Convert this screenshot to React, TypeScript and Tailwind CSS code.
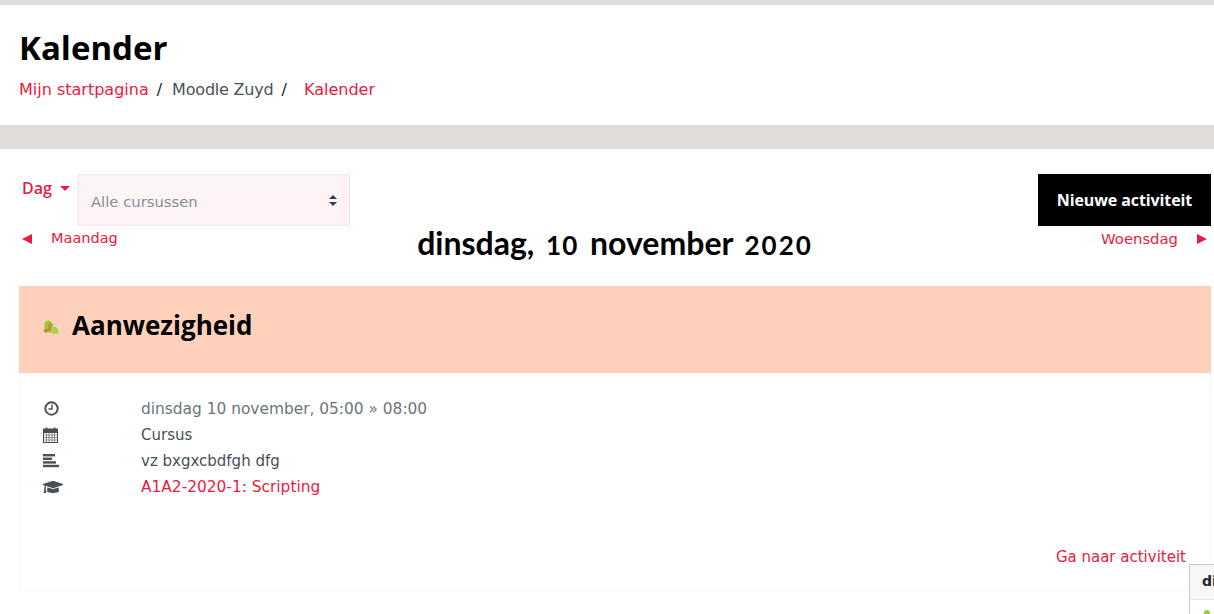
import { FaGraduationCap } from "react-icons/fa";

const body = "font-['DejaVu_Sans',Verdana,sans-serif]";
const display = "font-['Lato',sans-serif]";

function AttendanceIcon() {
  return (
    <svg width="17" height="16" viewBox="0.5 1.5 17 14" className="mb-[6px] shrink-0">
      <path d="M2 11 L2 5 Q3 2 5 2 L7 2 L9 5 L9 14 L3 14 Z" fill="#9acd32" />
      <path d="M6 3 Q8 2 9 4 L11 6 L10 9 L9 13 L2 14 L1 11 L6 10 Z" fill="#8cc63f" />
      <path d="M1 12 L6 10 L6 6 L7.5 5 L8 11 L3 14 Z" fill="#e8702a" />
      <path d="M10 9 Q13 7 15 10 L16 14 L17 15 L8 15 L10 13 Z" fill="#a4d63c" />
    </svg>
  );
}

function SelectArrows() {
  return (
    <svg width="8" height="11" viewBox="0 0 8 11">
      <path d="M4 0 L8 4 L0 4 Z M0 7 L8 7 L4 11 Z" fill="#343a40" />
    </svg>
  );
}

function ClockIcon() {
  return (
    <svg width="15" height="15" viewBox="0 0 15 15" fill="none" stroke="#495057" className="ml-[1px] -mt-[1px]">
      <circle cx="7.5" cy="7.5" r="6.2" strokeWidth="2" />
      <path d="M8 3.5 V8 H4.5" strokeWidth="1.4" />
    </svg>
  );
}

function CalendarIcon() {
  return (
    <svg width="16" height="16" viewBox="0 0 16 16" fill="none" stroke="#495057">
      <rect x="0.5" y="2.5" width="14" height="13" strokeWidth="1" />
      <rect x="0.5" y="2" width="14" height="3.5" fill="#495057" strokeWidth="1" />
      <path d="M3.5 0.5 V4 M11.5 0.5 V4" strokeWidth="1.6" />
      <path d="M0.5 8 H14.5 M0.5 10.5 H14.5 M0.5 13 H14.5 M3.5 5.5 V15.5 M6 5.5 V15.5 M9 5.5 V15.5 M11.5 5.5 V15.5" strokeWidth="0.6" />
    </svg>
  );
}

function AlignIcon() {
  return (
    <svg width="16" height="14" viewBox="0 0 16 14" fill="#495057">
      <rect x="0" y="0" width="12" height="2.4" />
      <rect x="0" y="3.6" width="9" height="2.4" />
      <rect x="0" y="7.2" width="13" height="2.4" />
      <rect x="0" y="10.8" width="16" height="2.4" />
    </svg>
  );
}

function InfoRow({ icon, children }: { icon: React.ReactNode; children: React.ReactNode }) {
  return (
    <div className="flex h-[26px] items-center">
      <div className="flex w-[98px] items-center">{icon}</div>
      <div>{children}</div>
    </div>
  );
}

export default function App() {
  return (
    <div className={`${body} relative h-[614px] overflow-hidden bg-white text-[15px] text-[#495057]`}>
      <div className="h-[5px] bg-[#e0dcd9]" />
      <header className="h-[120px] px-[19px] pt-[21px]">
        <h1 className="font-['Open_Sans',sans-serif] text-[33px] font-bold leading-[44px] text-black">Kalender</h1>
        <nav className="mt-[8px] flex h-[24px] items-center text-[16px]">
          <a className="text-[#ea1a40]">Mijn startpagina</a>
          <span className="ml-[8px] mr-[10px] text-[#212529]">/</span>
          <span className="tracking-[-0.2px]">Moodle Zuyd</span>
          <span className="ml-[8px] mr-[17px] text-[#212529]">/</span>
          <a className="text-[#ea1a40]">Kalender</a>
        </nav>
      </header>
      <div className="h-[24px] bg-[#e0dcd9]" />
      <main className="pl-[19px] pr-[3px] pt-[25px]">
        <div className="flex items-start justify-between">
          <div className="flex items-start">
            <button className="ml-[3px] mt-[2px] flex w-[56px] items-center font-['Open_Sans',sans-serif] text-[16px] font-semibold text-[#ea1a40]">
              Dag
              <span className="ml-[8px] border-x-[5px] border-t-[5px] border-x-transparent border-t-[#ea1a40]" />
            </button>
            <div className="flex h-[52px] w-[272px] items-center justify-between border border-[#f2e6e8] bg-[#fff4f5] px-[12px] text-[#868e96]">
              <span className="mt-[2px] pt-[2px] text-[14.8px]">Alle cursussen</span>
              <SelectArrows />
            </div>
          </div>
          <button className="h-[52px] w-[173px] bg-black font-['Open_Sans',sans-serif] text-[16px] font-bold tracking-[-0.1px] text-white">
            Nieuwe activiteit
          </button>
        </div>
        <div className="flex h-[60px] items-start justify-between">
          <a className="mt-[1px] flex h-[24px] w-[300px] items-center text-[14.5px] text-[#ea1a40]">
            <span className="ml-[3px] mr-[19px] border-y-[5px] border-r-[10px] border-y-transparent border-r-[#ea1a40]" />
            Maandag
          </a>
          <h2 className={`${display} text-[32px] font-bold leading-[34px] text-black [word-spacing:4px]`}>
            dinsdag, <span className="text-[26px] tracking-[1px]">10</span> november <span className="text-[26px] tracking-[2px]">2020</span>
          </h2>
          <a className="mt-[1px] flex h-[24px] w-[300px] items-center justify-end text-[14.8px] text-[#ea1a40]">
            Woensdag
            <span className="ml-[19px] mr-[4px] border-y-[5px] border-l-[10px] border-y-transparent border-l-[#ea1a40]" />
          </a>
        </div>
        <section>
          <div className="flex h-[87px] items-center gap-[12px] bg-[#ffd0bb] pl-[24px]">
            <AttendanceIcon />
            <h3 className="mb-[8px] font-['Open_Sans',sans-serif] text-[26px] font-bold text-black">Aanwezigheid</h3>
          </div>
          <div className="h-[218px] rounded-b border border-t-0 border-[#f6f6f6] pl-[23px] pr-[24px] pt-[23px]">
            <InfoRow icon={<ClockIcon />}>
              <span className="relative top-[1px] text-[15.4px] text-[#6c757d]">dinsdag 10 november, 05:00 » 08:00</span>
            </InfoRow>
            <InfoRow icon={<CalendarIcon />}>Cursus</InfoRow>
            <InfoRow icon={<AlignIcon />}>vz bxgxcbdfgh dfg</InfoRow>
            <InfoRow icon={<FaGraduationCap size={20} color="#495057" />}>
              <a className="relative top-[1px] text-[15.4px] text-[#ea1a40]">A1A2-2020-1: Scripting</a>
            </InfoRow>
            <div className="mt-[46px] text-right">
              <a className="text-[#ea1a40]">Ga naar activiteit</a>
            </div>
          </div>
        </section>
      </main>
      <div className="absolute left-[1189px] top-[564px] h-[60px] w-[40px] border border-[#c8c8c8] bg-white">
        <div className="h-[35px] border-b border-[#e5e5e5] bg-[#f7f7f7] pl-[12px] pt-[6px] text-[14px] font-bold leading-[20px] text-[#212529]">di</div>
        <div className="ml-[14px] mt-[10px] h-[6px] w-[6px] rounded-full bg-[#9acd32]" />
      </div>
    </div>
  );
}
